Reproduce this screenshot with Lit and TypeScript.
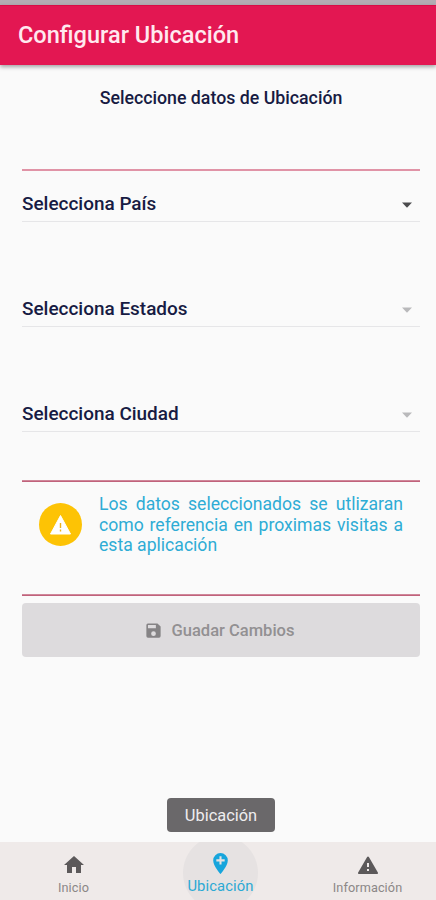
import { LitElement, html, css } from "lit";
import { customElement } from "lit/decorators.js";

@customElement("app-root")
export class AppRoot extends LitElement {
  static styles = css`
    :host { display: flex; flex-direction: column; box-sizing: border-box; height: 900px; width: 436px; background: #fafafa; font-family: Roboto, "Liberation Sans", sans-serif; color: #171b43; overflow: hidden; font-weight: 500; position: relative; }
    svg { display: block; flex: none; }
    .status { height: 5px; background: #b3adb3; flex: none; }
    header { box-sizing: border-box; height: 60px; flex: none; background: #e31752; color: #ffe9ef; display: flex; align-items: center; padding: 0 0 2px 18px; font-size: 23.55px; border-top: 1px solid #d80d45; box-shadow: 0 2px 4px rgba(0,0,0,.35); }
    main { padding: 0 16px 0 22px; flex: 1; }
    h1 { margin: 0; padding: 22px 0 0; height: 82px; font-size: 17.75px; font-weight: 500; line-height: 22px; text-align: center; }
    .line { height: 2px; background: #e093a6; }
    .line.deep { height: 1px; border-top: 1px solid #cf8799; background: #c0627b; }
    .select { height: 50px; display: flex; align-items: flex-end; justify-content: space-between; border-bottom: 1px solid #e6e6e8; font-size: 18.95px; line-height: 35px; margin-bottom: 54px; }
    .select.last { margin-bottom: 48px; }
    .arrow { width: 10px; height: 6px; margin: 0 8px 13px 0; fill: #4b4b4d; }
    .arrow.off { fill: #b9b9bb; }
    .note { display: flex; height: 112px; align-items: flex-start; }
    .warn { width: 43px; height: 43px; margin: 21px 16px 0 17px; }
    .note p { margin: 12px 17px 0 1px; flex: 1; text-align: justify; font-size: 17.6px; line-height: 20.5px; color: #2eacd5; font-weight: 400; }
    .save { box-sizing: border-box; margin-top: 7px; height: 54px; padding-right: 3px; border-radius: 4px; background: #dddbdd; color: #929092; display: flex; align-items: center; justify-content: center; gap: 8px; font-size: 16.55px; }
    .disk { width: 19px; height: 19px; fill: #858385; }
    nav { height: 58px; background: #efeae9; display: grid; grid-template-columns: 147px 147px 147px; flex: none; overflow: hidden; }
    .tab { display: flex; flex-direction: column; align-items: center; color: #8b8787; font-size: 12.7px; font-weight: 400; line-height: 16px; letter-spacing: .1px; }
    .tab svg { width: 24px; height: 24px; fill: #5c595a; margin: 11px 0 3px; }
    .tab.active { color: #2ca9d4; font-size: 14.8px; background: radial-gradient(circle at 50% 31px, #e6e2e2 37px, transparent 38px); }
    .tab.active svg { fill: #17a5dc; height: 25px; width: 25px; margin: 9px 0 2px; }
    .tip { position: absolute; left: 167px; top: 798px; width: 108px; height: 34px; border-radius: 4px; background: #6a686a; color: #efedef; display: flex; align-items: center; justify-content: center; font-size: 16.4px; font-weight: 400; }
  `;

  private arrow(off: boolean) {
    return html`<svg class="arrow ${off ? "off" : ""}" viewBox="0 0 10 6"><path d="M0 .5h10L5 5.7z"/></svg>`;
  }

  render() {
    return html`
      <div class="status"></div>
      <header>Configurar Ubicación</header>
      <main>
        <h1>Seleccione datos de Ubicación</h1>
        <div class="line"></div>
        <div class="select">Selecciona País${this.arrow(false)}</div>
        <div class="select">Selecciona Estados${this.arrow(true)}</div>
        <div class="select last">Selecciona Ciudad${this.arrow(true)}</div>
        <div class="line deep"></div>
        <div class="note">
          <svg class="warn" viewBox="0 0 43 43"><circle cx="21.5" cy="21.5" r="21.5" fill="#fdc305"/><path d="M21.5 12.5 31.5 31h-20z" fill="#fff" stroke="#fff" stroke-width="1" stroke-linejoin="round"/><path d="M20.8 20h1.4v5h-1.4zM20.8 26.5h1.4v2h-1.4z" fill="#eeb21b"/></svg>
          <p>Los datos seleccionados se utlizaran como referencia en proximas visitas a esta aplicación</p>
        </div>
        <div class="line deep"></div>
        <div class="save">
          <svg class="disk" viewBox="0 0 24 24"><path d="M17 3H5a2 2 0 0 0-2 2v14a2 2 0 0 0 2 2h14a2 2 0 0 0 2-2V7zm-5 16a3 3 0 1 1 0-6 3 3 0 0 1 0 6zm3-10H5V5h10z"/></svg>
          Guadar Cambios
        </div>
      </main>
      <nav>
        <div class="tab"><svg viewBox="0 0 24 24"><path d="M10 20v-6h4v6h5v-8h3L12 3 2 12h3v8z"/></svg>Inicio</div>
        <div class="tab active"><svg viewBox="0 0 24 24"><path d="M12 2a7 7 0 0 0-7 7c0 5.25 7 13 7 13s7-7.75 7-13a7 7 0 0 0-7-7zm4 8h-3v3h-2v-3H8V8h3V5h2v3h3z"/></svg>Ubicación</div>
        <div class="tab"><svg viewBox="0 0 24 24"><path d="M3 21h18a1 1 0 0 0 .87-1.5L12.87 4a1 1 0 0 0-1.74 0L2.13 19.5A1 1 0 0 0 3 21zm10-3h-2v-2h2zm0-4h-2v-4h2z"/></svg>Información</div>
      </nav>
      <div class="tip" role="tooltip">Ubicación</div>`;
  }
}
